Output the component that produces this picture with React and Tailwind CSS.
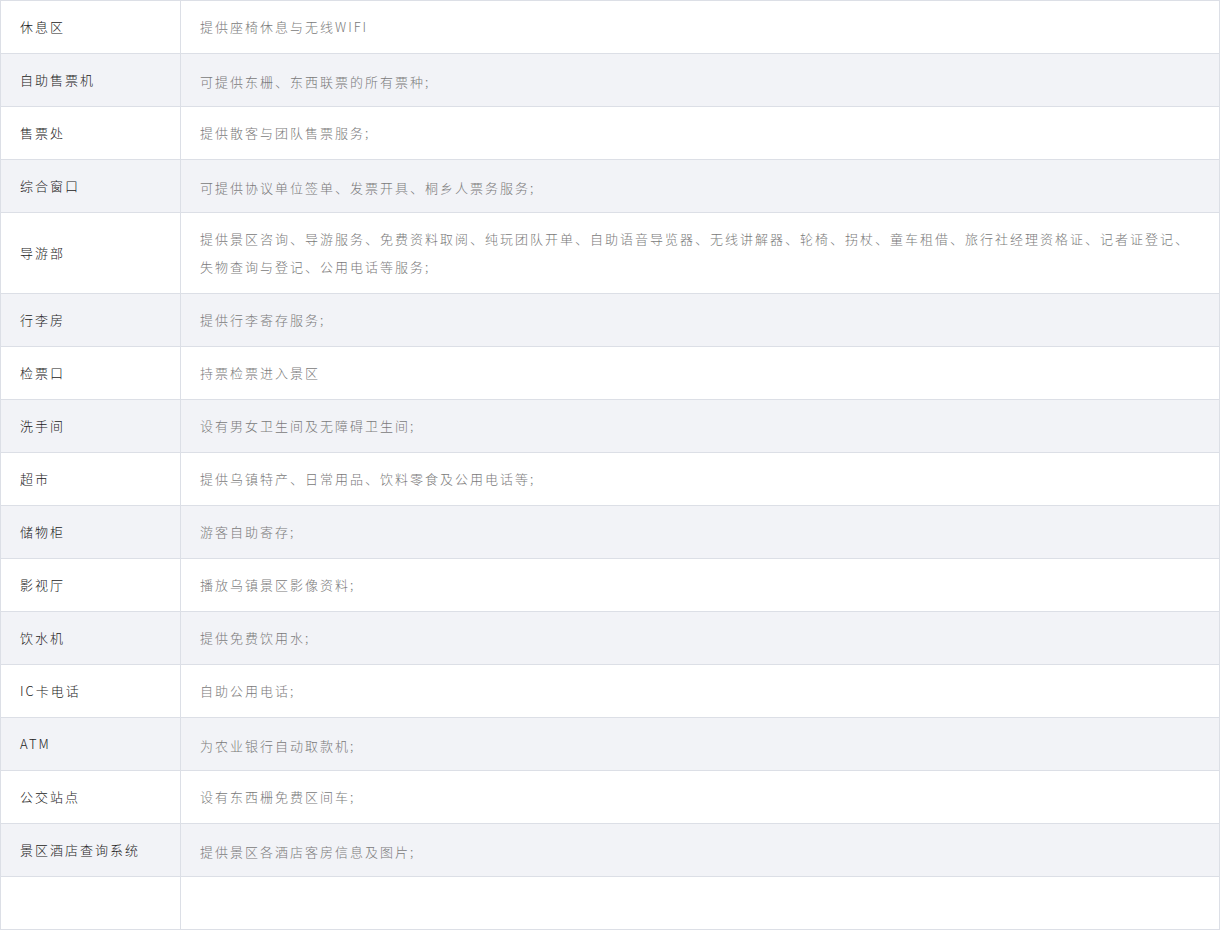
import React from "react";

const rows = [
  ["休息区", "提供座椅休息与无线WIFI"],
  ["自助售票机", "可提供东栅、东西联票的所有票种;", true],
  ["售票处", "提供散客与团队售票服务;"],
  ["综合窗口", "可提供协议单位签单、发票开具、桐乡人票务服务;", true],
  ["导游部", "提供景区咨询、导游服务、免费资料取阅、纯玩团队开单、自助语音导览器、无线讲解器、轮椅、拐杖、童车租借、旅行社经理资格证、记者证登记、失物查询与登记、公用电话等服务;"],
  ["行李房", "提供行李寄存服务;"],
  ["检票口", "持票检票进入景区"],
  ["洗手间", "设有男女卫生间及无障碍卫生间;"],
  ["超市", "提供乌镇特产、日常用品、饮料零食及公用电话等;"],
  ["储物柜", "游客自助寄存;"],
  ["影视厅", "播放乌镇景区影像资料;"],
  ["饮水机", "提供免费饮用水;"],
  ["IC卡电话", "自助公用电话;"],
  ["ATM", "为农业银行自动取款机;", true],
  ["公交站点", "设有东西栅免费区间车;"],
  ["景区酒店查询系统", "提供景区各酒店客房信息及图片;", true],
  ["", ""],
];

export default function App() {
  return (
    <div
      className="w-[1220px] h-[930px] bg-white"
      style={{ fontFamily: '"Noto Sans CJK SC", "Noto Sans", sans-serif' }}
    >
      <div className="border border-[#dcdfe6] border-b-0">
        {rows.map(([label, desc, low], i) => (
          <div
            key={i}
            className={`flex border-b border-[#dcdfe6] ${i % 2 === 1 ? "bg-[#f2f3f7]" : "bg-white"}`}
          >
            <div className="w-[180px] shrink-0 border-r border-[#dcdfe6] pl-[19px] pr-5 py-3 flex items-center text-[13px] leading-[28px] tracking-[2px] font-light text-[#222222] min-h-[52px]">
              {label}
            </div>
            <div
              className={`flex-1 pl-[19px] pr-5 py-3 flex items-center text-[13px] leading-[28px] tracking-[2px] font-light text-[#7a7a7a] min-h-[52px] ${low ? "pt-[14px] pb-[10px]" : ""}`}
            >
              <span>{desc}</span>
            </div>
          </div>
        ))}
      </div>
    </div>
  );
}
